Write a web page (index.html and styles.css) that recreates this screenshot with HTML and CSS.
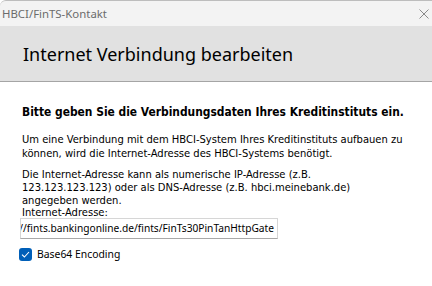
FILE: index.html
```html
<!DOCTYPE html>
<html lang="de">
<head>
    <meta charset="UTF-8">
    <meta name="viewport" content="width=device-width, initial-scale=1.0">
    <title>HBCI/FinTS-Kontakt</title>
    <link rel="stylesheet" href="styles.css">
</head>
<body>
    <div class="window">
        <div class="titlebar">
            <span class="title">HBCI/FinTS-Kontakt</span>
            <svg class="close" width="10" height="10" viewBox="0 0 10 10">
                <path d="M0.5 0.5 L9.5 9.5 M9.5 0.5 L0.5 9.5" stroke="#8a8a8a" stroke-width="1" fill="none"/>
            </svg>
        </div>

        <div class="header">
            <h1>Internet Verbindung bearbeiten</h1>
        </div>

        <div class="content">
            <p class="lead">Bitte geben Sie die Verbindungsdaten Ihres Kreditinstituts ein.</p>

            <p class="text first">Um eine Verbindung mit dem HBCI-System Ihres Kreditinstituts aufbauen zu<br>können, wird die Internet-Adresse des HBCI-Systems benötigt.</p>

            <p class="text">Die Internet-Adresse kann als numerische IP-Adresse (z.B.<br>123.123.123.123) oder als DNS-Adresse (z.B. hbci.meinebank.de)<br>angegeben werden.</p>

            <label class="label">Internet-Adresse:</label>
            <div class="field">
                <span>https://fints.bankingonline.de/fints/FinTs30PinTanHttpGate</span>
            </div>

            <div class="check">
                <span class="box">
                    <svg width="9" height="7" viewBox="0 0 9 7">
                        <path d="M1 3.6 L3.4 6 L8 1" stroke="#fff" stroke-width="1.1" fill="none"/>
                    </svg>
                </span>
                <span>Base64 Encoding</span>
            </div>
        </div>
    </div>
</body>
</html>
```

FILE: styles.css
```css
body {
    margin: 0;
    background-color: #fff;
}
.window {
    width: 432px;
    height: 286px;
    overflow: hidden;
    background-color: #fff;
}
.titlebar {
    height: 26px;
    background-color: #f3f3f3;
    display: flex;
    align-items: center;
    justify-content: space-between;
    padding: 0 2px 0 2px;
    box-sizing: border-box;
    border-top: 1px solid #bdbdbd;
    border-top-left-radius: 6px;
}
.title {
    font-family: "Noto Sans", sans-serif;
    font-size: 11.4px;
    color: #6b6b6b;
}
.close {
    margin-right: 1px;
}
.header {
    height: 55px;
    background-color: #e1e1e1;
    border-bottom: 1px solid #a5a5a5;
    display: flex;
    align-items: center;
    padding-left: 23px;
}
h1 {
    margin: 0;
    font-family: "Noto Sans", sans-serif;
    font-weight: normal;
    font-size: 18px;
    color: #000;
}
.content {
    padding: 24px 10px 0 22px;
    font-family: "DejaVu Sans Condensed", "Liberation Sans", sans-serif;
    font-size: 11.1px;
    line-height: 13px;
    color: #000;
}
.content p {
    margin: 0;
}
.lead {
    font-weight: bold;
    font-size: 11.9px;
    margin-bottom: 14px !important;
}
.first {
    line-height: 14px;
    margin-bottom: 7px !important;
}
.label {
    display: block;
    line-height: 11px;
}
.field {
    width: 258px;
    height: 21px;
    margin: 0 0 0 -2px;
    box-sizing: border-box;
    border: 1px solid #d6d6d6;
    border-bottom-color: #a8a8a8;
    display: flex;
    align-items: center;
    justify-content: flex-end;
    overflow: hidden;
    white-space: nowrap;
    padding-right: 3px;
    font-family: "Noto Sans", sans-serif;
    font-size: 10.2px;
}
.check {
    display: flex;
    align-items: center;
    gap: 5px;
    margin: 9px 0 0 -3px;
    font-family: "Noto Sans", sans-serif;
    font-size: 10.4px;
}
.box {
    width: 13px;
    height: 13px;
    border-radius: 3px;
    background-color: #005fb8;
    display: flex;
    align-items: center;
    justify-content: center;
}
```
